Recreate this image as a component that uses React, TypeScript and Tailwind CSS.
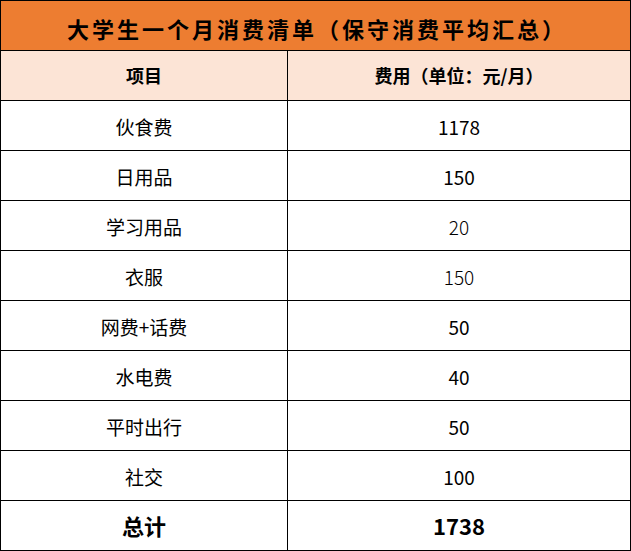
import React from 'react';

interface Row {
  name: string;
  cost: string;
  light?: boolean;
}

const rows: Row[] = [
  { name: '伙食费', cost: '1178' },
  { name: '日用品', cost: '150' },
  { name: '学习用品', cost: '20', light: true },
  { name: '衣服', cost: '150', light: true },
  { name: '网费+话费', cost: '50' },
  { name: '水电费', cost: '40' },
  { name: '平时出行', cost: '50' },
  { name: '社交', cost: '100' },
];

const font = { fontFamily: '"Noto Sans CJK SC", "Noto Sans", sans-serif' };

export default function App() {
  return (
    <div className="w-[631px] h-[551px] bg-white" style={font}>
      <div className="grid grid-cols-[286px_342px] auto-rows-[49px] gap-px p-px bg-black w-[631px]">
        {/* Title */}
        <div className="col-span-2 flex items-center justify-center bg-[#ed7d31] pt-[6px] pl-[3px] text-[22px] font-bold tracking-[3px] text-black">
          大学生一个月消费清单（保守消费平均汇总）
        </div>

        {/* Header */}
        <div className="flex items-center justify-center bg-[#fce4d6] text-[18px] font-bold text-black">项目</div>
        <div className="flex items-center justify-center bg-[#fce4d6] text-[18px] font-bold text-black">
          费用（单位：元/月）
        </div>

        {/* Items */}
        {rows.map((row) => (
          <React.Fragment key={row.name}>
            <div className="flex items-center justify-center bg-white pt-[3px] text-[19px] text-black">{row.name}</div>
            <div
              className={
                row.light
                  ? 'flex items-center justify-center bg-white pt-[3px] text-[19px] font-light text-black'
                  : 'flex items-center justify-center bg-white pt-[3px] text-[19px] text-black'
              }
            >
              {row.cost}
            </div>
          </React.Fragment>
        ))}

        {/* Total */}
        <div className="flex items-center justify-center bg-white text-[22px] font-bold text-black">总计</div>
        <div className="flex items-center justify-center bg-white text-[22px] font-bold text-black">1738</div>
      </div>
    </div>
  );
}
